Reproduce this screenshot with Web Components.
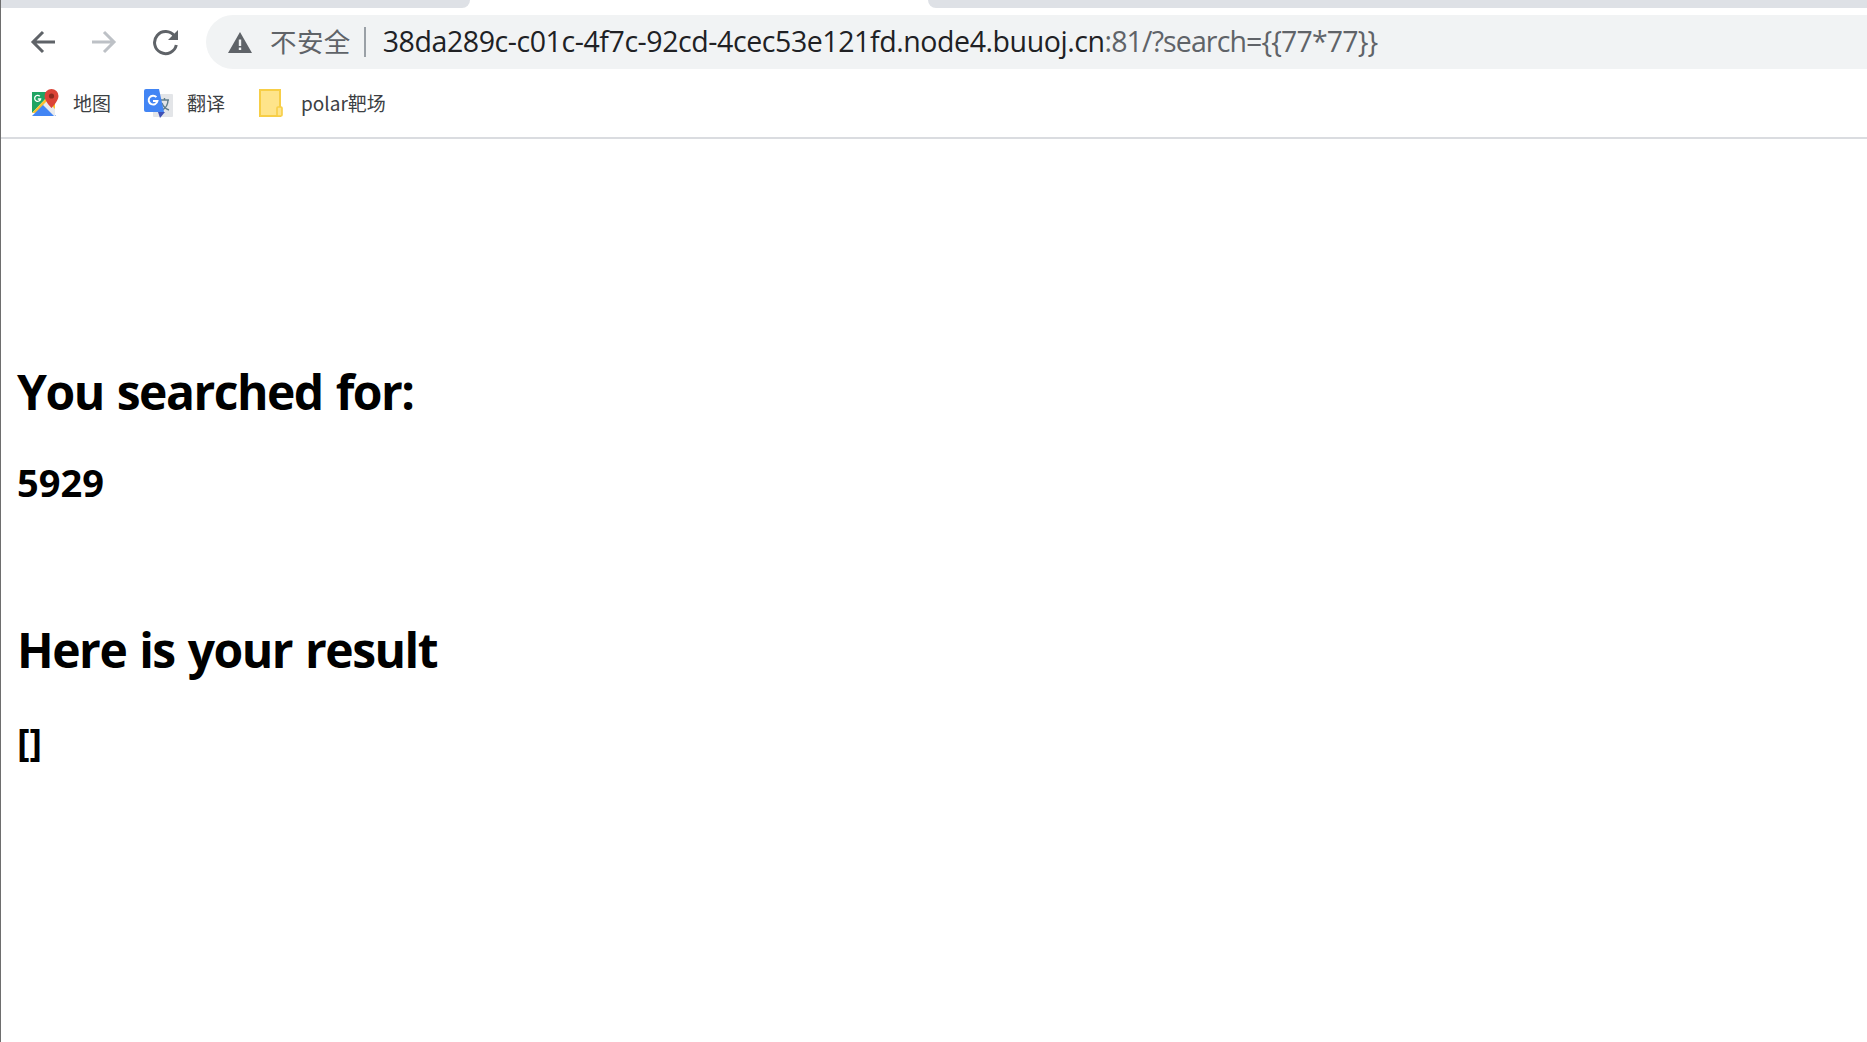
<!DOCTYPE html>
<html lang="zh">
<head>
<meta charset="utf-8">
<title>buuoj</title>
<style>
  html, body { margin: 0; height: 100%; background: #fff; overflow: hidden; }
  body { font-family: "Open Sans", "Noto Sans CJK SC", sans-serif; }
</style>
</head>
<body>
<browser-window>
  <browser-tabs slot="chrome"></browser-tabs>
  <browser-toolbar slot="chrome"></browser-toolbar>
  <browser-bookmarks slot="chrome"></browser-bookmarks>
  <search-result query="5929" result="[]"></search-result>
</browser-window>

<script>
class BrowserWindow extends HTMLElement {
  constructor() {
    super();
    this.attachShadow({ mode: 'open' });
    this.shadowRoot.innerHTML = `
    <style>
      :host { display: flex; flex-direction: column; height: 1042px; box-sizing: border-box; border-left: 1px solid #6e6e6e; }
      header { display: block; border-bottom: 2px solid #dadce0; }
      main { flex: 1; }
    </style>
    <header><slot name="chrome"></slot></header>
    <main><slot></slot></main>
    `;
  }
}

class BrowserTabs extends HTMLElement {
  constructor() {
    super();
    this.attachShadow({ mode: 'open' });
    this.shadowRoot.innerHTML = `
    <style>
      :host { display: flex; height: 8px; background: #fff; }
      .left { flex: none; width: 469px; background: #dee1e6; border-bottom-right-radius: 8px; }
      .middle { flex: none; width: 458px; }
      .right { flex: 1; background: #dee1e6; border-bottom-left-radius: 8px; }
    </style>
    <div class="left"></div><div class="middle"></div><div class="right"></div>
    `;
  }
}

class BrowserToolbar extends HTMLElement {
  constructor() {
    super();
    this.attachShadow({ mode: 'open' });
    this.shadowRoot.innerHTML = `
    <style>
      :host { display: flex; align-items: center; height: 54px; padding: 7px 0 0 29px; }
      .nav { display: flex; align-items: center; gap: 35px; width: 176px; flex: none; }
      svg { display: block; flex: none; }
      .omnibox { flex: 1; display: flex; align-items: center; height: 54px; background: #f1f3f4; border-radius: 27px 0 0 27px; padding-left: 22px; white-space: nowrap; }
      .state { font: 26.5px/54px "Noto Sans CJK SC", sans-serif; color: #5f6368; margin-left: 18px; letter-spacing: 0.4px; position: relative; top: -1px; }
      .sep { width: 2px; height: 30px; background: #9aa0a6; margin: 0 17px 0 13px; flex: none; }
      .url { font: 28.5px/54px "Open Sans", sans-serif; color: #5f6368; letter-spacing: -0.87px; position: relative; top: -1px; }
      .url b { font-weight: 400; color: #202124; letter-spacing: -0.42px; }
    </style>
    <div class="nav">
      <svg width="26" height="26" viewBox="0 0 26 26" fill="none" stroke="#5f6368" stroke-width="3"><path d="M25 13H3M13 3L3 13l10 10"/></svg>
      <svg width="26" height="26" viewBox="0 0 26 26" fill="none" stroke="#bdc1c6" stroke-width="3"><path d="M1 13h22M13 3l10 10-10 10"/></svg>
      <svg width="27" height="27" viewBox="0 0 27 27" fill="none"><path d="M22.5 7.2A11 11 0 1 0 24.3 16" stroke="#5f6368" stroke-width="3"/><path d="M26 1v10H16z" fill="#5f6368"/></svg>
    </div>
    <div class="omnibox">
      <svg width="24" height="21" viewBox="0 0 24 21"><path fill-rule="evenodd" d="M12 0l12 21H0zM10.8 7.5v6.5h2.4V7.5zM10.8 15.5v2.5h2.4v-2.5z" fill="#5f6368"/></svg>
      <span class="state">不安全</span>
      <span class="sep"></span>
      <span class="url"><b>38da289c-c01c-4f7c-92cd-4cec53e121fd.node4.buuoj.cn</b>:81/?search={{77*77}}</span>
    </div>
    `;
  }
}

class BookmarkItem extends HTMLElement {
  constructor() {
    super();
    this.attachShadow({ mode: 'open' });
    this.shadowRoot.innerHTML = `
    <style>
      :host { display: flex; align-items: center; gap: var(--bm-gap, 14px); font: 19px/28px "Noto Sans CJK SC", sans-serif; color: #3c4043; white-space: nowrap; }
    </style>
    <slot name="icon"></slot><slot></slot>
    `;
  }
}

class BrowserBookmarks extends HTMLElement {
  constructor() {
    super();
    this.attachShadow({ mode: 'open' });
    this.shadowRoot.innerHTML = `
    <style>
      :host { display: flex; align-items: center; height: 68px; padding: 0 0 0 30px; box-sizing: border-box; }
      svg { display: block; }
      .maps { margin-right: 33px; }
      .translate { margin-right: 34px; --bm-gap: 14px; }
      .polar { --bm-gap: 18px; }
    </style>
    <bookmark-item class="maps">
      <svg slot="icon" width="28" height="28" viewBox="0 0 28 28">
        <path d="M1 3h20L1 24z" fill="#1fa463"/>
        <path d="M1 24L21 3h3v20z" fill="#fbc02d"/>
        <path d="M1 27l12-12 12 12z" fill="#4285f4"/>
        <path d="M16 12l8 8v7h-1l-11-11z" fill="#e8eaed"/>
        <path d="M20.5 0a7 7 0 0 0-7 7c0 5 7 12 7 12s7-7 7-12a7 7 0 0 0-7-7z" fill="#db4437"/>
        <circle cx="20.5" cy="7" r="2.6" fill="#8c2a1f"/>
        <path d="M8.8 7.2A3 3 0 1 0 9.6 10H6.8" fill="none" stroke="#fff" stroke-width="1.3"/>
      </svg>
      地图
    </bookmark-item>
    <bookmark-item class="translate">
      <svg slot="icon" width="29" height="29" viewBox="0 0 29 29">
        <rect x="9" y="5" width="20" height="23" rx="1" fill="#e3e5e8"/>
        <path d="M16 11h9M20.5 9v2M18 21c4-2 6-6 6-10M18 14c1 3 4 6 7 7" fill="none" stroke="#607d8b" stroke-width="1.4"/>
        <path d="M2 0h13l5 23H2a2 2 0 0 1-2-2V2a2 2 0 0 1 2-2z" fill="#4285f4"/>
        <path d="M14 23h7l-5 6z" fill="#3f51b5"/>
        <path d="M12.4 8.2A4.4 4.4 0 1 0 13.4 12H9" fill="none" stroke="#fff" stroke-width="2"/>
      </svg>
      翻译
    </bookmark-item>
    <bookmark-item class="polar">
      <svg slot="icon" width="24" height="28" viewBox="0 0 24 28">
        <rect x="1" y="1" width="20" height="26" fill="#fee48a" stroke="#f7ce46" stroke-width="2"/>
        <rect x="18" y="18" width="5" height="9" rx="1" fill="#fee48a" stroke="#f7ce46" stroke-width="1.6"/>
      </svg>
      polar靶场
    </bookmark-item>
    `;
  }
}

class SearchResult extends HTMLElement {
  constructor() {
    super();
    this.attachShadow({ mode: 'open' });
    this.shadowRoot.innerHTML = `
    <style>
      :host { display: flex; flex-direction: column; padding: 221px 0 0 16px; font-family: "Open Sans", "Noto Sans", sans-serif; color: #000; }
      h1 { margin: 0; font-size: 48px; line-height: 64px; font-weight: 700; letter-spacing: -1.5px; word-spacing: 2px; }
      h2 { margin: 0; font-size: 38px; line-height: 48px; font-weight: 700; }
      h2.query { margin-top: 34px; }
      h1.second { margin-top: 112px; }
      h2.result { margin-top: 35px; }
    </style>
    <h1>You searched for:</h1>
    <h2 class="query"></h2>
    <h1 class="second">Here is your result</h1>
    <h2 class="result"></h2>
    `;
  }
  connectedCallback() {
    this.shadowRoot.querySelector('.query').textContent = this.getAttribute('query');
    this.shadowRoot.querySelector('.result').textContent = this.getAttribute('result');
  }
}

customElements.define('browser-window', BrowserWindow);
customElements.define('browser-tabs', BrowserTabs);
customElements.define('browser-toolbar', BrowserToolbar);
customElements.define('bookmark-item', BookmarkItem);
customElements.define('browser-bookmarks', BrowserBookmarks);
customElements.define('search-result', SearchResult);
</script>
</body>
</html>
